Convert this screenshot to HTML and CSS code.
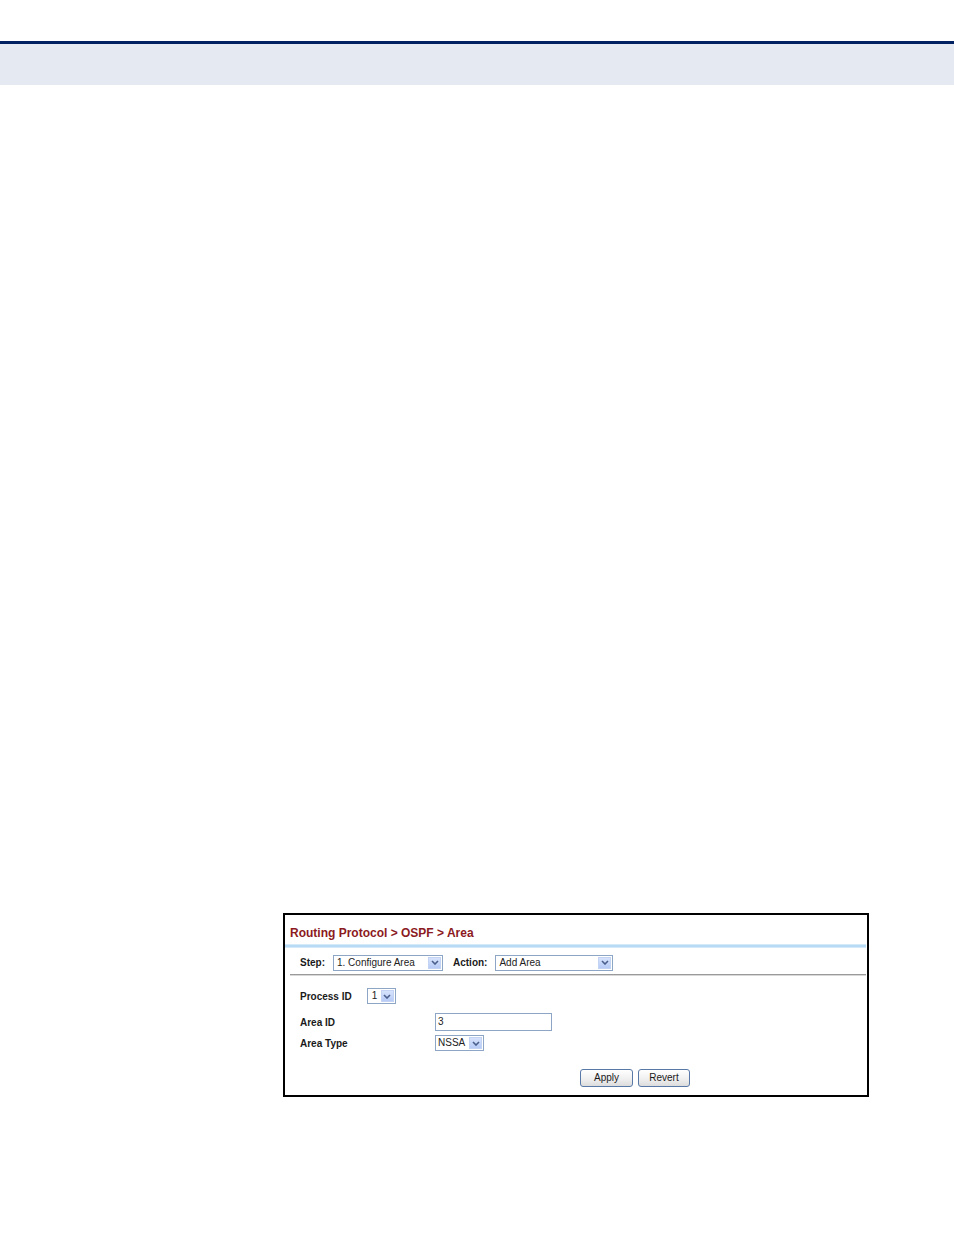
FILE: index.html
```html
<!DOCTYPE html>
<html>
<head>
<meta charset="utf-8">
<link rel="stylesheet" href="styles.css">
</head>
<body>
<header class="page-head">
  <div class="rule"></div>
  <div class="band"></div>
</header>
<main class="content">
  <div class="figure">
    <div class="title">Routing Protocol &gt; OSPF &gt; Area</div>
    <div class="blue-rule"></div>
    <div class="toolbar">
      <span class="lbl">Step:</span>
      <div class="select sel-step"><span class="val">1. Configure Area</span><span class="arrow"><svg width="8" height="5" viewBox="0 0 8 5"><path d="M1 1 L4 4 L7 1" fill="none" stroke="#4a5f8c" stroke-width="1.6"/></svg></span></div>
      <span class="lbl lbl-action">Action:</span>
      <div class="select sel-action"><span class="val">Add Area</span><span class="arrow"><svg width="8" height="5" viewBox="0 0 8 5"><path d="M1 1 L4 4 L7 1" fill="none" stroke="#4a5f8c" stroke-width="1.6"/></svg></span></div>
    </div>
    <div class="gray-rule"></div>
    <div class="form">
      <div class="row row-pid">
        <span class="lbl">Process ID</span>
        <div class="select sel-pid"><span class="val">1</span><span class="arrow"><svg width="8" height="5" viewBox="0 0 8 5"><path d="M1 1 L4 4 L7 1" fill="none" stroke="#4a5f8c" stroke-width="1.6"/></svg></span></div>
      </div>
      <div class="row row-aid">
        <span class="lbl wide">Area ID</span>
        <div class="input">3</div>
      </div>
      <div class="row row-type">
        <span class="lbl wide">Area Type</span>
        <div class="select sel-type"><span class="val">NSSA</span><span class="arrow"><svg width="8" height="5" viewBox="0 0 8 5"><path d="M1 1 L4 4 L7 1" fill="none" stroke="#4a5f8c" stroke-width="1.6"/></svg></span></div>
      </div>
    </div>
    <div class="buttons">
      <button class="btn btn-apply">Apply</button>
      <button class="btn btn-revert">Revert</button>
    </div>
  </div>
</main>
</body>
</html>
```
FILE: styles.css
```css
html, body {
  margin: 0;
  padding: 0;
  background: #ffffff;
  font-family: "Liberation Sans", Arial, sans-serif;
}
.page-head {
  padding-top: 41px;
}
.rule {
  height: 3px;
  background: #002263;
}
.band {
  height: 41px;
  background: #e5e9f1;
}
.content {
  padding-top: 828px;
  padding-left: 283px;
}
.figure {
  width: 582px;
  height: 180px;
  border: 2px solid #000000;
  box-sizing: content-box;
}
.title {
  height: 29px;
  box-sizing: border-box;
  padding: 11px 0 0 5px;
  font-size: 12px;
  font-weight: bold;
  color: #8b1a22;
  line-height: 14px;
}
.blue-rule {
  height: 4px;
  background: linear-gradient(#e3f1fb, #a9d4f2 50%, #e3f1fb);
  margin-right: 1px;
}
.toolbar {
  display: flex;
  align-items: center;
  height: 26px;
  padding-left: 15px;
  box-sizing: border-box;
  padding-top: 3px;
}
.lbl {
  font-size: 10px;
  font-weight: bold;
  color: #1a1a1a;
}
.lbl-action {
  margin-left: 10px;
}
.select {
  display: flex;
  align-items: center;
  justify-content: space-between;
  height: 16px;
  box-sizing: border-box;
  border: 1px solid #8ea6c6;
  background: #ffffff;
  font-size: 10px;
  color: #222;
  padding-left: 3px;
  padding-right: 1px;
}
.val {
  line-height: 14px;
}
.arrow {
  width: 13px;
  height: 12px;
  box-sizing: border-box;
  border: 1px solid #c3d3f3;
  background: linear-gradient(#d7e3fc, #b7cbf6);
  display: flex;
  align-items: center;
  justify-content: center;
}
.sel-step {
  width: 110px;
  margin-left: 8px;
}
.sel-action {
  width: 118px;
  margin-left: 8px;
}
.gray-rule {
  height: 1px;
  background: #9a9a9a;
  border-bottom: 1px solid #d8d8d8;
  margin-left: 5px;
  margin-right: 1px;
}
.form {
  padding-left: 15px;
  padding-top: 12px;
}
.row {
  display: flex;
  align-items: center;
}
.row-pid {
  height: 16px;
}
.row-aid {
  height: 18px;
  margin-top: 9px;
}
.row-type {
  height: 16px;
  margin-top: 4px;
}
.lbl.wide {
  width: 135px;
}
.sel-pid {
  width: 29px;
  margin-left: 15px;
  padding-left: 4px;
}
.input {
  width: 117px;
  height: 18px;
  box-sizing: border-box;
  border: 1px solid #8ea6c6;
  font-size: 10px;
  color: #222;
  line-height: 16px;
  padding-left: 2px;
}
.sel-type {
  width: 49px;
  padding-left: 2px;
}
.buttons {
  display: flex;
  gap: 5px;
  padding-left: 295px;
  margin-top: 18px;
}
.btn {
  height: 18px;
  box-sizing: border-box;
  border: 1px solid #5879a6;
  border-radius: 3px;
  background: linear-gradient(#ffffff, #eeeeee 60%, #dcdcdc);
  font-family: "Liberation Sans", Arial, sans-serif;
  font-size: 10px;
  color: #1a1a1a;
  padding: 0;
  line-height: 16px;
}
.btn-apply {
  width: 53px;
}
.btn-revert {
  width: 52px;
}
```
